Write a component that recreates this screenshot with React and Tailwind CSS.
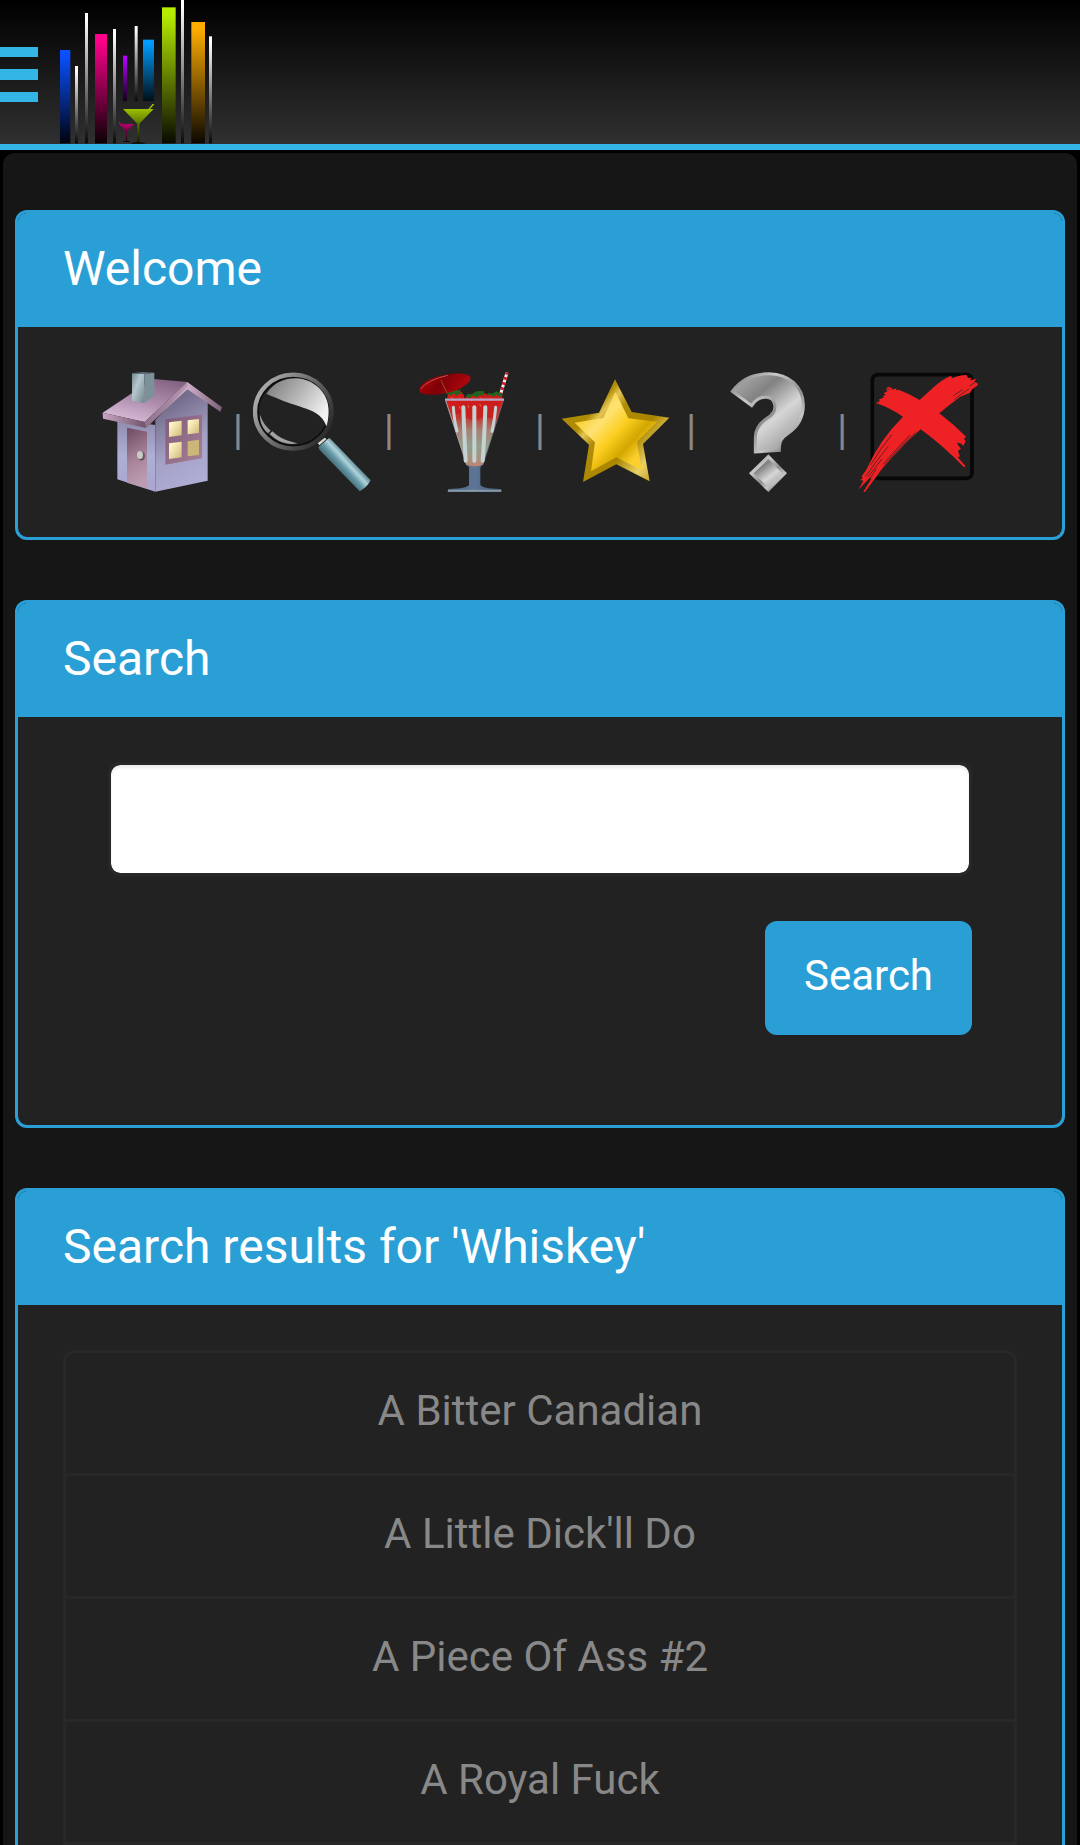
import React, { Fragment, useState } from "react";

const drinks = [
  { id: 1, name: "A Bitter Canadian" },
  { id: 2, name: "A Little Dick'll Do" },
  { id: 3, name: "A Piece Of Ass #2" },
  { id: 4, name: "A Royal Fuck" },
];

// Fading bars of the logo: x, y, width, bottom, gradient
const logoBars = [
  [180, 150, 31, 430, "blue"],
  [225, 198, 9, 430, "white"],
  [255, 39, 9, 430, "white"],
  [285, 102, 36, 430, "pink"],
  [339, 87, 9, 430, "white"],
  [369, 167, 12, 303, "purple"],
  [404, 78, 9, 303, "white"],
  [429, 119, 33, 303, "cyan"],
  [486, 22, 41, 430, "green"],
  [543, -6, 9, 430, "white"],
  [574, 66, 41, 430, "orange"],
  [627, 109, 9, 430, "white"],
];

const logoColors = {
  blue: ["#0a50ff", "#00030d"],
  white: ["#ffffff", "#0a0a0a"],
  pink: ["#ff008c", "#0a0005"],
  purple: ["#b400ff", "#12001a"],
  cyan: ["#009dff", "#000e17"],
  green: ["#b8ec00", "#070900"],
  orange: ["#ffae00", "#0a0600"],
};

const Logo = () => (
  <svg viewBox="168 0 480 432" className="h-36 w-40" aria-hidden="true">
    <defs>
      {Object.entries(logoColors).map(([name, [from, to]]) => (
        <linearGradient key={name} id={`bar-${name}`} x1="0" y1="0" x2="0" y2="1">
          <stop offset="0.05" stopColor={from} />
          <stop offset="1" stopColor={to} />
        </linearGradient>
      ))}
      <linearGradient id="glass-green" x1="0" y1="312" x2="0" y2="430" gradientUnits="userSpaceOnUse">
        <stop offset="0" stopColor="#b0dc00" />
        <stop offset="1" stopColor="#0a0d00" />
      </linearGradient>
      <linearGradient id="glass-pink" x1="0" y1="364" x2="0" y2="428" gradientUnits="userSpaceOnUse">
        <stop offset="0" stopColor="#d1007a" />
        <stop offset="1" stopColor="#050003" />
      </linearGradient>
    </defs>
    {logoBars.map(([x, y, width, bottom, color]) => (
      <rect key={x} x={x} y={y} width={width} height={bottom - y} fill={`url(#bar-${color})`} />
    ))}
    <path
      d="M357 372H403L381 393V422Q390 423 392 426H368Q370 423 378 422V393Z M357 365L364 372H357Z"
      fill="url(#glass-pink)"
    />
    <path
      d="M369 327H445L458 312L463 313L450 327H461L418 371V425Q434 427 436 431H393Q396 427 412 425V371Z"
      fill="url(#glass-green)"
    />
  </svg>
);

const HouseIcon = () => (
  <svg viewBox="36 36 360 360" className="size-[120px]" aria-hidden="true">
    <defs>
      <linearGradient id="h-roof" x1="0.7" y1="0" x2="0.2" y2="1">
        <stop offset="0" stopColor="#856583" />
        <stop offset="0.5" stopColor="#b08fae" />
        <stop offset="1" stopColor="#dcc0dc" />
      </linearGradient>
      <linearGradient id="h-wall" x1="0.3" y1="0" x2="0.6" y2="1">
        <stop offset="0.15" stopColor="#766d8c" />
        <stop offset="0.6" stopColor="#a3a1c6" />
        <stop offset="1" stopColor="#b0aed4" />
      </linearGradient>
      <linearGradient id="h-front" x1="0" y1="0" x2="0" y2="1">
        <stop offset="0" stopColor="#8f8bad" />
        <stop offset="0.5" stopColor="#aeafd4" />
        <stop offset="1" stopColor="#a9a6d0" />
      </linearGradient>
      <linearGradient id="h-door" x1="0" y1="0" x2="0.2" y2="1">
        <stop offset="0" stopColor="#6e4a63" />
        <stop offset="0.6" stopColor="#a98499" />
        <stop offset="1" stopColor="#bb9cb2" />
      </linearGradient>
      <linearGradient id="h-frame" x1="0" y1="0" x2="1" y2="1">
        <stop offset="0" stopColor="#7d5b79" />
        <stop offset="1" stopColor="#a98198" />
      </linearGradient>
      <linearGradient id="h-pane" x1="0" y1="0" x2="1" y2="1">
        <stop offset="0.2" stopColor="#fff3c4" />
        <stop offset="1" stopColor="#cdb878" />
      </linearGradient>
      <linearGradient id="h-chimney" x1="0" y1="0" x2="1" y2="1">
        <stop offset="0" stopColor="#728992" />
        <stop offset="0.4" stopColor="#b5c7ce" />
        <stop offset="1" stopColor="#70858d" />
      </linearGradient>
      <linearGradient id="h-edge" x1="0" y1="0" x2="1" y2="0">
        <stop offset="0" stopColor="#c8a5c2" />
        <stop offset="0.35" stopColor="#71566e" />
        <stop offset="0.7" stopColor="#d2b1cd" />
        <stop offset="1" stopColor="#7c6077" />
      </linearGradient>
    </defs>
    <path d="M82 180L196 195V395L82 358Z" fill="url(#h-front)" />
    <path d="M196 180L292 80L353 125V362L196 395Z" fill="url(#h-wall)" />
    <path d="M111 203L171 215V386L111 368Z" fill="url(#h-door)" />
    <path d="M190 57L292 66L164 186L38 158Z" fill="url(#h-roof)" />
    <path d="M38 158L164 186L292 66L396 142L391 155L292 88L168 204L39 176Z" fill="url(#h-edge)" />
    <path d="M164 186L292 66L293 79L168 204Z" fill="#a286a0" opacity="0.6" />
    <path d="M126 40L163 41V130L126 122Z" fill="url(#h-chimney)" />
    <path d="M163 41L193 38V107L163 130Z" fill="#7c9099" />
    <path d="M126 40L156 36L193 38L163 42Z" fill="#5d6f77" />
    <path d="M226 178L336 164V295L226 314Z" fill="url(#h-frame)" />
    <path d="M237 187L275 182V226L237 231Z" fill="url(#h-pane)" />
    <path d="M293 181L327 177V219L293 223Z" fill="url(#h-pane)" />
    <path d="M237 250L275 245V292L237 297Z" fill="url(#h-pane)" />
    <path d="M293 244L327 239V285L293 289Z" fill="#cbb778" />
    <ellipse cx="154" cy="288" rx="11" ry="14" fill="#69545f" />
    <ellipse cx="150" cy="285" rx="9" ry="12" fill="#c9cbc6" />
  </svg>
);

const MagnifierIcon = () => (
  <svg viewBox="40 36 360 360" className="size-[120px]" aria-hidden="true">
    <defs>
      <linearGradient id="m-ring" x1="0" y1="0.2" x2="1" y2="0.8">
        <stop offset="0" stopColor="#b2b2b2" />
        <stop offset="0.5" stopColor="#6b6b6b" />
        <stop offset="1" stopColor="#242424" />
      </linearGradient>
      <linearGradient id="m-shine" x1="0" y1="0" x2="1" y2="0.6">
        <stop offset="0" stopColor="#777777" />
        <stop offset="0.5" stopColor="#b2b2b2" />
        <stop offset="1" stopColor="#f2f2f2" />
      </linearGradient>
      <linearGradient id="m-handle" x1="298" y1="330" x2="335" y2="296" gradientUnits="userSpaceOnUse">
        <stop offset="0" stopColor="#48717d" />
        <stop offset="0.35" stopColor="#689ba9" />
        <stop offset="0.65" stopColor="#b0d4dc" />
        <stop offset="1" stopColor="#55808c" />
      </linearGradient>
    </defs>
    <ellipse cx="161" cy="155" rx="107" ry="103" fill="none" stroke="#0e0e0e" strokeWidth="8" />
    <ellipse cx="161" cy="155" rx="115" ry="111" fill="none" stroke="url(#m-ring)" strokeWidth="13" />
    <path
      d="M80 101C104 66 137 54 170 55C221 57 267 97 267 152Q267 180 260 199C253 177 239 162 210 150C180 137 151 133 80 101Z"
      fill="url(#m-shine)"
    />
    <path d="M61 164C60 190 70 206 85 220L93 212C78 199 68 184 61 164Z" fill="#999999" />
    <path d="M90 222L98 214C121 236 145 244 174 250C144 256 113 246 90 222Z" fill="#a2a2a2" />
    <path d="M232 253L258 231L268 236L240 262Z" fill="#151515" />
    <path d="M234 250L255 233L261 237L239 256Z" fill="#dedbd2" />
    <path d="M236 261L268 234Q274 237 278 242L393 361Q382 382 360 394L240 270Z" fill="url(#m-handle)" />
  </svg>
);

const CocktailIcon = () => (
  <svg viewBox="13 36 360 360" className="size-[120px]" aria-hidden="true">
    <defs>
      <linearGradient id="c-drink" x1="0" y1="0" x2="0" y2="1">
        <stop offset="0" stopColor="#e01818" />
        <stop offset="0.25" stopColor="#c33530" />
        <stop offset="0.45" stopColor="#a77f72" />
        <stop offset="0.7" stopColor="#91a08d" />
        <stop offset="1" stopColor="#bd8575" />
      </linearGradient>
      <linearGradient id="c-umbrella" x1="0" y1="0" x2="1" y2="0.3">
        <stop offset="0" stopColor="#c00008" />
        <stop offset="0.5" stopColor="#7d0006" />
        <stop offset="1" stopColor="#b0080e" />
      </linearGradient>
      <linearGradient id="c-stem" x1="0" y1="0" x2="1" y2="0">
        <stop offset="0" stopColor="#48637c" />
        <stop offset="0.5" stopColor="#5d7698" />
        <stop offset="1" stopColor="#3f566d" />
      </linearGradient>
    </defs>
    <path d="M302 105L322 38" stroke="#f2eeee" strokeWidth="9" />
    <path d="M302 105L322 38" stroke="#cc1522" strokeWidth="10" strokeDasharray="8 8" />
    <path d="M138 119H312L250 314Q226 328 200 314Z" fill="url(#c-drink)" stroke="#65777c" strokeWidth="2" />
    <path d="M142 116Q146 88 167 90Q191 90 196 117Z" fill="#d91a1a" />
    <path d="M195 120Q200 101 222 103Q244 92 264 104L307 101L309 120Z" fill="#d31a1a" />
    <path d="M148 123Q158 174 186 160Q201 184 236 180Q250 163 279 177L301 124Z" fill="#c81c1c" opacity="0.75" />
    <g fill="#20651d">
      <path d="M144 101L152 91L160 96L164 84L173 93L184 88L179 96L192 102L177 102L169 109L163 99L153 107Z" />
      <path d="M197 110L205 101L215 104L227 95L239 93L254 94L249 103L258 108L240 105L230 113L221 106L210 115Z" />
      <path d="M259 107L267 98L276 101L290 94L299 99L307 99L304 112L291 104L281 111L273 105Z" />
    </g>
    <path d="M156 111L160 119M179 114L184 121M214 117L216 124M244 113L247 120M273 115L276 122M205 136L207 143M240 132L243 139M179 139L181 146" stroke="#e4a34a" strokeWidth="2" />
    <path d="M136 119H313" stroke="#b3a4c4" strokeWidth="7" />
    <path d="M138 122L202 315" stroke="#b89b9b" strokeWidth="3" />
    <g stroke="#c5d2d4" strokeWidth="12" strokeLinecap="round" fill="none">
      <path d="M161 142Q164 184 172 213" strokeWidth="9" />
      <path d="M191 142Q194 231 198 302" />
      <path d="M224 142V302" />
      <path d="M257 142Q254 235 249 302" />
      <path d="M288 142Q284 184 277 214" strokeWidth="9" />
    </g>
    <path d="M59 93C60 68 97 51 144 43C181 37 211 42 213 53C213 68 183 91 140 99C103 107 66 107 59 93Z" fill="url(#c-umbrella)" />
    <path d="M64 88L124 58L205 46M124 58L137 98M124 58L179 82" stroke="#91060a" strokeWidth="3" fill="none" />
    <path d="M63 87Q83 60 144 46" stroke="#bd5555" strokeWidth="3" fill="none" />
    <path d="M124 60L144 103" stroke="#8e4d20" strokeWidth="3" />
    <path d="M200 316Q224 325 247 316L242 323V375Q248 386 302 387Q306 389 305 396H144Q143 389 148 387Q201 386 208 375V322Z" fill="url(#c-stem)" />
    <path d="M145 392H305" stroke="#8698a8" strokeWidth="6" />
  </svg>
);

const StarIcon = () => (
  <svg viewBox="18 38 360 360" className="size-[120px]" aria-hidden="true">
    <defs>
      <linearGradient id="s-edge" x1="0" y1="0.1" x2="1" y2="0.9">
        <stop offset="0.1" stopColor="#ad8900" />
        <stop offset="0.28" stopColor="#b08c05" />
        <stop offset="0.34" stopColor="#e3c555" />
        <stop offset="0.43" stopColor="#b08d08" />
        <stop offset="0.65" stopColor="#aa8500" />
        <stop offset="0.82" stopColor="#ead167" />
        <stop offset="1" stopColor="#ad8908" />
      </linearGradient>
      <linearGradient id="s-face" x1="0" y1="0.1" x2="0.9" y2="0.9">
        <stop offset="0.1" stopColor="#f6c816" />
        <stop offset="0.35" stopColor="#ffe274" />
        <stop offset="0.54" stopColor="#fcce20" />
        <stop offset="0.72" stopColor="#d3a700" />
        <stop offset="0.86" stopColor="#fbd02e" />
      </linearGradient>
    </defs>
    <path d="M195 60L245 158L358 175L279 254L299 366L199 315L99 368L117 256L35 178L147 160Z" fill="url(#s-edge)" />
    <path d="M196 98L235 177L321 187L261 247L275 333L199 294L123 336L135 249L74 190L160 176Z" fill="url(#s-face)" />
  </svg>
);

const HelpIcon = () => (
  <svg viewBox="21 36 360 360" className="size-[120px]" aria-hidden="true">
    <defs>
      <linearGradient id="q-face" x1="0" y1="0" x2="0.75" y2="1">
        <stop offset="0" stopColor="#b5b5b5" />
        <stop offset="0.35" stopColor="#828282" />
        <stop offset="0.65" stopColor="#d6d6d6" />
        <stop offset="1" stopColor="#9a9a9a" />
      </linearGradient>
      <linearGradient id="q-edge" x1="0" y1="0" x2="0.8" y2="1">
        <stop offset="0" stopColor="#777777" />
        <stop offset="0.3" stopColor="#c9c9c9" />
        <stop offset="0.6" stopColor="#8d8d8d" />
        <stop offset="0.8" stopColor="#c5c5c5" />
        <stop offset="1" stopColor="#767676" />
      </linearGradient>
    </defs>
    <path
      d="M97 94C123 57 163 41 208 41C265 42 310 78 310 135C310 178 292 202 263 221C243 234 238 244 238 271L166 276V232C166 202 184 186 202 174C220 163 227 151 224 134C221 118 209 111 195 112C177 112 165 122 155 137Z"
      fill="url(#q-face)"
      stroke="url(#q-edge)"
      strokeWidth="9"
    />
    <path d="M205 290L254 340L205 389L154 340Z" fill="url(#q-face)" stroke="url(#q-edge)" strokeWidth="10" />
  </svg>
);

const CloseIcon = () => (
  <svg viewBox="54 35 360 360" className="size-[120px]" aria-hidden="true">
    <rect x="97" y="43" width="299" height="311" rx="16" fill="none" stroke="#060707" strokeWidth="11" />
    <g fill="#ee2225">
      <path d="M108 128L120 122L116 118L132 111L129 106L137 104L131 98L141 94L138 88L144 79L158 84L153 89L170 84L168 90L176 88Q206 99 239 119C275 86 302 58 333 46L336 54Q354 45 380 44L384 54L395 52L391 60L408 55L403 65L412 68L414 74L397 87L390 97L361 109Q329 132 298 159Q341 192 378 229L372 236L377 243L370 257Q365 248 355 247Q348 246 357 258L363 265L354 271L355 276L360 288L353 291L377 318L372 321Q312 258 242 207Q155 281 75 395L70 394L94 355L89 353L55 388L70 361L60 359L68 354L65 348L79 328Q119 238 189 169Q151 143 108 128Z" />
    </g>
    <g stroke="#202020" strokeWidth="2" fill="none">
      <path d="M156 222Q121 265 92 314M145 258Q110 300 77 348M126 296Q98 330 84 351M226 217Q156 281 117 339M210 224Q162 273 130 312M109 325L70 387" />
      <path d="M387 85L343 118M368 88L340 106M405 66L389 77M149 85L137 91" />
    </g>
  </svg>
);

const navLinks = [
  { label: "Home", Icon: HouseIcon },
  { label: "Find a drink", Icon: MagnifierIcon },
  { label: "Cocktails", Icon: CocktailIcon },
  { label: "Favorites", Icon: StarIcon },
  { label: "Help", Icon: HelpIcon },
  { label: "Exit", Icon: CloseIcon },
];

const Header = () => (
  <header className="flex h-[150px] items-start border-b-6 border-[#33b5e5] bg-linear-to-b/srgb from-black to-[#303030]">
    <button type="button" aria-label="Open menu" className="cursor-pointer">
      <svg viewBox="0 0 38 144" className="h-36 w-[38px]" aria-hidden="true">
        <path d="M0 47H38V57H0ZM0 69H38V80H0ZM0 92H38V102H0Z" fill="#33b5e5" />
      </svg>
    </button>
    <a href="#home" aria-label="Home" className="ml-[18px]">
      <Logo />
    </a>
  </header>
);

const Panel = ({ title, children }) => (
  <section className="rounded-xl border-3 border-[#2a9fd6] bg-[#222]">
    <h3 className="rounded-t-[9px] bg-[#2a9fd6] px-[45px] pt-[30px] pb-8 text-5xl leading-[52px] text-white">
      {title}
    </h3>
    <div className="p-[45px]">{children}</div>
  </section>
);

export default function App() {
  const [query, setQuery] = useState("");

  return (
    <div className="min-h-screen bg-black font-[Roboto,sans-serif] text-[42px] leading-[60px] text-[#888]">
      <Header />

      <main className="mx-[3px] mt-[3px] flex flex-col gap-[60px] rounded-t-xl bg-[#161616] px-3 pt-[57px]">
        <Panel title="Welcome">
          <nav className="-mx-3 flex items-center justify-center">
            {navLinks.map(({ label, Icon }, i) => (
              <Fragment key={label}>
                {i > 0 && <span className="pb-1 whitespace-pre"> | </span>}
                <a href={`#${label.toLowerCase().replaceAll(" ", "-")}`} aria-label={label} className="shrink-0">
                  <Icon />
                </a>
              </Fragment>
            ))}
          </nav>
        </Panel>

        <Panel title="Search">
          <form
            className="flex flex-col items-end gap-[45px] px-[45px] pb-[45px]"
            onSubmit={(e) => e.preventDefault()}
          >
            <input
              type="text"
              aria-label="Search"
              value={query}
              onChange={(e) => setQuery(e.target.value)}
              className="h-[114px] w-full rounded-xl border-3 border-[#282828] bg-white px-9 text-[#555] shadow-[inset_0_3px_3px_rgba(0,0,0,0.075)] bg-clip-padding"
            />
            <button
              type="submit"
              className="cursor-pointer rounded-xl bg-[#2a9fd6] px-[39px] pt-[25px] pb-[29px] text-white"
            >
              Search
            </button>
          </form>
        </Panel>

        <Panel title="Search results for 'Whiskey'">
          <ul className="rounded-t-xl border-3 border-b-0 border-[#282828] text-center">
            {drinks.map((drink) => (
              <li key={drink.id} className="border-b-3 border-[#282828]">
                <a href={`#drink-${drink.id}`} className="block px-[45px] pt-7 pb-8">
                  {drink.name}
                </a>
              </li>
            ))}
          </ul>
        </Panel>
      </main>
    </div>
  );
}
